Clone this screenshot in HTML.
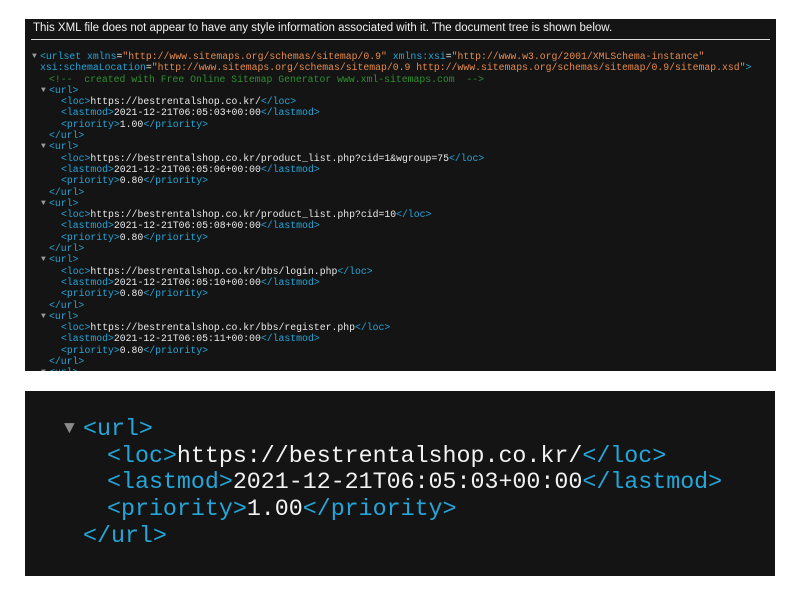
<!DOCTYPE html>
<html><head><meta charset="utf-8"><style>
html,body{margin:0;padding:0;background:#fff;width:801px;height:608px;overflow:hidden}
.p1{position:absolute;left:25px;top:19px;width:751px;height:352px;background:#141414;overflow:hidden}
.hd{position:absolute;left:8px;top:3px;font:11.5px "Liberation Sans",sans-serif;color:#f0f0f0;white-space:nowrap}
.ln{position:absolute;left:6px;top:20px;width:739px;height:1px;background:#ddd}
.code{position:absolute;left:0;top:32px;font:9.8px/11.3px "Liberation Mono",monospace;color:#e8e8e8}
.code div{position:relative;height:11.3px;white-space:pre}
.t{color:#25a6d9}.v{color:#e58a4e}.c{color:#2f8f2f}.a{color:#25a6d9}
.tri{color:#9a9a9a;position:absolute;font-size:8px;margin-left:-8px}
.l0{padding-left:15px}.l1{padding-left:24px}.l2{padding-left:36px}
.p2{position:absolute;left:25px;top:391px;width:750px;height:185px;background:#141414;overflow:hidden}
.code2{position:absolute;left:0;top:25px;font:23.3px/26.7px "Liberation Mono",monospace;color:#f2f2f2}
.code2 div{position:relative;height:26.7px;white-space:pre}
.tri2{color:#8a8a8a;font-size:18px;position:absolute;margin-left:-19px;top:0px}
.m1{padding-left:58px}.m2{padding-left:82px}
</style></head><body>
<div class="p1">
<div class="hd">This XML file does not appear to have any style information associated with it. The document tree is shown below.</div>
<div class="ln"></div>
<div class="code"><div class="l0"><span class="tri">▼</span><span class="t">&lt;urlset</span> <span class="a">xmlns</span>=<span class="v">"http://www.sitemaps.org/schemas/sitemap/0.9"</span> <span class="a">xmlns:xsi</span>=<span class="v">"http://www.w3.org/2001/XMLSchema-instance"</span></div><div class="l0"><span class="a">xsi:schemaLocation</span>=<span class="v">"http://www.sitemaps.org/schemas/sitemap/0.9 http://www.sitemaps.org/schemas/sitemap/0.9/sitemap.xsd"</span><span class="t">&gt;</span></div><div class="l1"><span class="c">&lt;!--  created with Free Online Sitemap Generator www.xml-sitemaps.com  --&gt;</span></div><div class="l1"><span class="tri">▼</span><span class="t">&lt;url&gt;</span></div><div class="l2"><span class="t">&lt;loc&gt;</span>https://bestrentalshop.co.kr/<span class="t">&lt;/loc&gt;</span></div><div class="l2"><span class="t">&lt;lastmod&gt;</span>2021-12-21T06:05:03+00:00<span class="t">&lt;/lastmod&gt;</span></div><div class="l2"><span class="t">&lt;priority&gt;</span>1.00<span class="t">&lt;/priority&gt;</span></div><div class="l1"><span class="t">&lt;/url&gt;</span></div><div class="l1"><span class="tri">▼</span><span class="t">&lt;url&gt;</span></div><div class="l2"><span class="t">&lt;loc&gt;</span>https://bestrentalshop.co.kr/product_list.php?cid=1&amp;wgroup=75<span class="t">&lt;/loc&gt;</span></div><div class="l2"><span class="t">&lt;lastmod&gt;</span>2021-12-21T06:05:06+00:00<span class="t">&lt;/lastmod&gt;</span></div><div class="l2"><span class="t">&lt;priority&gt;</span>0.80<span class="t">&lt;/priority&gt;</span></div><div class="l1"><span class="t">&lt;/url&gt;</span></div><div class="l1"><span class="tri">▼</span><span class="t">&lt;url&gt;</span></div><div class="l2"><span class="t">&lt;loc&gt;</span>https://bestrentalshop.co.kr/product_list.php?cid=10<span class="t">&lt;/loc&gt;</span></div><div class="l2"><span class="t">&lt;lastmod&gt;</span>2021-12-21T06:05:08+00:00<span class="t">&lt;/lastmod&gt;</span></div><div class="l2"><span class="t">&lt;priority&gt;</span>0.80<span class="t">&lt;/priority&gt;</span></div><div class="l1"><span class="t">&lt;/url&gt;</span></div><div class="l1"><span class="tri">▼</span><span class="t">&lt;url&gt;</span></div><div class="l2"><span class="t">&lt;loc&gt;</span>https://bestrentalshop.co.kr/bbs/login.php<span class="t">&lt;/loc&gt;</span></div><div class="l2"><span class="t">&lt;lastmod&gt;</span>2021-12-21T06:05:10+00:00<span class="t">&lt;/lastmod&gt;</span></div><div class="l2"><span class="t">&lt;priority&gt;</span>0.80<span class="t">&lt;/priority&gt;</span></div><div class="l1"><span class="t">&lt;/url&gt;</span></div><div class="l1"><span class="tri">▼</span><span class="t">&lt;url&gt;</span></div><div class="l2"><span class="t">&lt;loc&gt;</span>https://bestrentalshop.co.kr/bbs/register.php<span class="t">&lt;/loc&gt;</span></div><div class="l2"><span class="t">&lt;lastmod&gt;</span>2021-12-21T06:05:11+00:00<span class="t">&lt;/lastmod&gt;</span></div><div class="l2"><span class="t">&lt;priority&gt;</span>0.80<span class="t">&lt;/priority&gt;</span></div><div class="l1"><span class="t">&lt;/url&gt;</span></div><div class="l1"><span class="tri">▼</span><span class="t">&lt;url&gt;</span></div></div>
</div>
<div class="p2">
<div class="code2"><div class="m1"><span class="tri2">▼</span><span class="t">&lt;url&gt;</span></div><div class="m2"><span class="t">&lt;loc&gt;</span>https://bestrentalshop.co.kr/<span class="t">&lt;/loc&gt;</span></div><div class="m2"><span class="t">&lt;lastmod&gt;</span>2021-12-21T06:05:03+00:00<span class="t">&lt;/lastmod&gt;</span></div><div class="m2"><span class="t">&lt;priority&gt;</span>1.00<span class="t">&lt;/priority&gt;</span></div><div class="m1"><span class="t">&lt;/url&gt;</span></div></div>
</div>
</body></html>
